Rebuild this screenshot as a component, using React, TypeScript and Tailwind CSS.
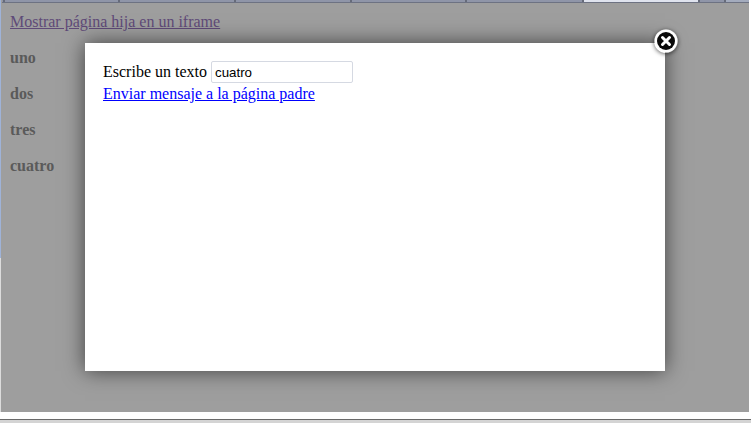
import React from 'react';

const serif = "font-['Liberation_Serif','Times_New_Roman',serif]";

// tab widths, first one starts just right of the window edge
const tabs = [3, 115, 116, 116, 115, 117];

const CloseIcon = () => (
  <svg width="24" height="24" viewBox="0 0 24 24">
    <circle cx="12" cy="12" r="11.5" fill="#fff" />
    <circle cx="12" cy="12" r="9" fill="#0a0a0a" />
    <path d="M8.5 8.5l7 7M15.5 8.5l-7 7" stroke="#fff" strokeWidth="3" strokeLinecap="round" />
  </svg>
);

export default function App() {
  return (
    <div className={`${serif} w-[751px] h-[423px] bg-white flex flex-col overflow-hidden relative`}>
      {/* Dimmed browser page */}
      <div className="h-[412px] w-[749px] flex">
        <div className="w-px flex flex-col">
          <div className="h-[258px] bg-[#9fb3d8]" />
          <div className="flex-1 bg-[#dcdcdc]" />
        </div>
        <div className="flex-1 pl-px bg-[#9e9e9e] flex flex-col">
          <div className="h-[3px] flex bg-[#8f95a8] border-b border-[#6d7282]">
            {tabs.map((w, i) => (
              <div key={i} className="border-r-2 border-[#666b7a] bg-[#8f95a8]" style={{ width: w }} />
            ))}
            <div className="w-[114px] bg-[#dfe3ee]" />
            <div className="w-[28px] border-x-2 border-[#666b7a] bg-[#8f95a8]" />
            <div className="flex-1 bg-[#a3abbd]" />
          </div>
          <div className="pl-[8px] pt-[10px] text-[16px] leading-[18px] text-[#5a5a5a]">
            <a className="underline text-[#5f4a78]">Mostrar página hija en un iframe</a>
            <div className="mt-[18px] flex flex-col gap-[18px] font-bold">
              <div>uno</div>
              <div>dos</div>
              <div>tres</div>
              <div>cuatro</div>
            </div>
          </div>
        </div>
      </div>

      {/* Bottom edge */}
      <div className="mt-[7px] h-px bg-[#6a6a6a]" />
      <div className="flex-1 bg-[#d4d4d4]" />

      {/* Modal */}
      <div className="absolute left-[85px] top-[43px] w-[580px] h-[328px] bg-white shadow-[0_0_20px_rgba(0,0,0,0.6)] pl-[18px] pt-[18px] text-[16px] leading-[18px] text-black">
        <div className="flex items-center h-[22px]">
          <span>Escribe un texto</span>
          <input
            readOnly
            value="cuatro"
            className="ml-[4px] w-[142px] h-[22px] px-[3px] border border-[#d5d9e2] rounded-[2px] outline-none text-[13.33px] font-['Liberation_Sans',Arial,sans-serif] text-black"
          />
        </div>
        <a className="block mt-[2px] underline text-[#0000ff]">Enviar mensaje a la página padre</a>
      </div>

      {/* Close button */}
      <div className="absolute left-[654px] top-[29px] rounded-full shadow-[0_1px_4px_rgba(0,0,0,0.6)]">
        <CloseIcon />
      </div>
    </div>
  );
}
